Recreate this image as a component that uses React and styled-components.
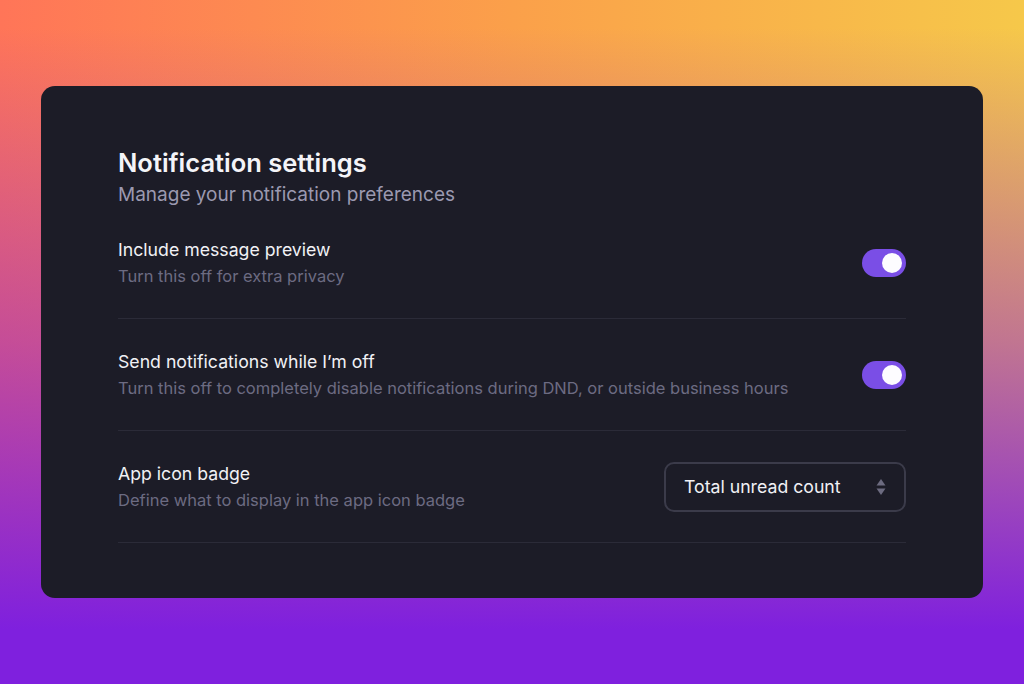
import React from 'react';
import styled, { createGlobalStyle } from 'styled-components';

const GlobalStyle = createGlobalStyle`
  html, body, #root {
    margin: 0;
    padding: 0;
    height: 100%;
  }
  body {
    font-family: Inter, "Noto Sans", sans-serif;
  }
`;

const Page = styled.div`
  box-sizing: border-box;
  width: 100%;
  height: 100%;
  padding: 86px 41px;
  background:
    linear-gradient(180deg, rgba(125, 31, 224, 0) 4%, rgba(140, 36, 215, 0.5) 50%, #7f20de 92%),
    linear-gradient(90deg, #ff7558 0%, #fba04a 50%, #f6c84a 100%);
`;

const Card = styled.div`
  box-sizing: border-box;
  height: 512px;
  background: #1c1c27;
  border-radius: 14px;
  padding: 62px 77px 0;
  color: #fff;
`;

const Title = styled.h1`
  margin: 0;
  font-size: 25.5px;
  font-weight: 600;
  line-height: 30px;
  color: #f4f4f8;
`;

const Subtitle = styled.p`
  margin: 5px 0 0;
  font-size: 19px;
  line-height: 24px;
  color: #9b99b0;
`;

const Row = styled.div`
  display: flex;
  align-items: center;
  justify-content: space-between;
  height: 111px;
  border-bottom: 1px solid #2b2b38;
`;

const Text = styled.div`
  display: flex;
  flex-direction: column;
  gap: 6px;
`;

const Label = styled.div`
  font-size: 17.7px;
  line-height: 21px;
  color: #f1f1f5;
`;

const Hint = styled.div`
  font-size: 16.5px;
  line-height: 20px;
  color: #6c6b82;
`;

const Toggle = styled.div`
  box-sizing: border-box;
  width: 44px;
  height: 28px;
  border-radius: 14px;
  padding: 4px;
  background: ${(p) => (p.$on ? '#7a4ee6' : '#3a3a48')};
  display: flex;
  justify-content: ${(p) => (p.$on ? 'flex-end' : 'flex-start')};
`;

const Knob = styled.div`
  width: 20px;
  height: 20px;
  border-radius: 50%;
  background: #fdfcff;
`;

const Select = styled.div`
  box-sizing: border-box;
  width: 242px;
  height: 50px;
  border: 2px solid #3b3b4a;
  border-radius: 10px;
  padding: 0 18px;
  display: flex;
  align-items: center;
  justify-content: space-between;
  font-size: 17.7px;
  color: #f1f1f5;
`;

const Chevrons = () => (
  <svg width="10" height="18" viewBox="0 0 10 18" fill="#6c6b80">
    <path d="M5 1 L9.5 7.5 H0.5 Z" />
    <path d="M5 17 L9.5 10.5 H0.5 Z" />
  </svg>
);

const settings = [
  { label: 'Include message preview', hint: 'Turn this off for extra privacy', kind: 'toggle' },
  {
    label: 'Send notifications while I’m off',
    hint: 'Turn this off to completely disable notifications during DND, or outside business hours',
    kind: 'toggle',
  },
  { label: 'App icon badge', hint: 'Define what to display in the app icon badge', kind: 'select' },
];

export default function App() {
  return (
    <Page>
      <GlobalStyle />
      <Card>
        <Title>Notification settings</Title>
        <Subtitle>Manage your notification preferences</Subtitle>
        {settings.map((s) => (
          <Row key={s.label}>
            <Text>
              <Label>{s.label}</Label>
              <Hint>{s.hint}</Hint>
            </Text>
            {s.kind === 'toggle' ? (
              <Toggle $on>
                <Knob />
              </Toggle>
            ) : (
              <Select>
                Total unread count
                <Chevrons />
              </Select>
            )}
          </Row>
        ))}
      </Card>
    </Page>
  );
}
